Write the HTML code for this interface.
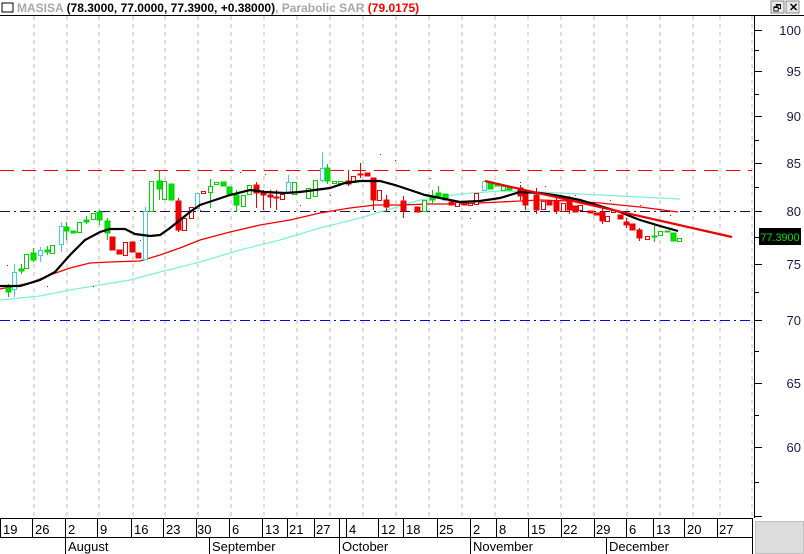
<!DOCTYPE html>
<html><head><meta charset="utf-8"><style>
body{margin:0;width:804px;height:554px;overflow:hidden;background:#fff;font-family:"Liberation Sans",sans-serif}
</style></head><body>
<svg width="804" height="554" xmlns="http://www.w3.org/2000/svg" style="position:absolute;left:0;top:0" font-family="Liberation Sans, sans-serif">
<rect x="0" y="0" width="804" height="554" fill="#fff"/>
<rect x="2" y="3" width="11" height="9" fill="#fff" stroke="#000" stroke-width="1"/>
<text x="17" y="12" font-size="12" font-weight="bold" fill="#a8a8a8">MASISA <tspan fill="#000">(78.3000, 77.0000, 77.3900, +0.38000)</tspan>, Parabolic SAR <tspan fill="#ff0000">(79.0175)</tspan></text>
<rect x="771" y="1" width="13" height="12" fill="#e8e8e8" stroke="#888"/>
<rect x="786" y="1" width="13" height="12" fill="#e8e8e8" stroke="#888"/>
<text x="773" y="11" font-size="9" fill="#000">🗗</text>
<text x="789" y="11" font-size="11" font-weight="bold" fill="#000">✕</text>
<line x1="0" y1="15.5" x2="804" y2="15.5" stroke="#000"/>
<g stroke="#bbb" stroke-dasharray="4,4">
<line x1="34" y1="16" x2="34" y2="518"/><line x1="67" y1="16" x2="67" y2="518"/><line x1="99" y1="16" x2="99" y2="518"/><line x1="133" y1="16" x2="133" y2="518"/><line x1="165" y1="16" x2="165" y2="518"/><line x1="198" y1="16" x2="198" y2="518"/><line x1="231" y1="16" x2="231" y2="518"/><line x1="264" y1="16" x2="264" y2="518"/><line x1="297" y1="16" x2="297" y2="518"/><line x1="330" y1="16" x2="330" y2="518"/><line x1="363" y1="16" x2="363" y2="518"/><line x1="396" y1="16" x2="396" y2="518"/><line x1="429" y1="16" x2="429" y2="518"/><line x1="462" y1="16" x2="462" y2="518"/><line x1="495" y1="16" x2="495" y2="518"/><line x1="528" y1="16" x2="528" y2="518"/><line x1="561" y1="16" x2="561" y2="518"/><line x1="594" y1="16" x2="594" y2="518"/><line x1="627" y1="16" x2="627" y2="518"/><line x1="660" y1="16" x2="660" y2="518"/><line x1="693" y1="16" x2="693" y2="518"/><line x1="720" y1="16" x2="720" y2="518"/><line x1="752" y1="16" x2="752" y2="518"/>
</g>
<line x1="0" y1="170.5" x2="752" y2="170.5" stroke="#ff0000" stroke-dasharray="14,8"/>
<line x1="0" y1="211.5" x2="752" y2="211.5" stroke="#101060" stroke-dasharray="10,4,2,4"/>
<line x1="0" y1="320.5" x2="752" y2="320.5" stroke="#0000ff" stroke-dasharray="10,4,2,4"/>
<polyline fill="none" stroke="#7ff0d8" stroke-width="1.3" points="0,300 40,296 70,290 100,285 130,280 160,272 200,262 240,250 280,240 320,228 360,218 380,212 420,200 460,194 500,191 540,192 580,194 620,196 660,198 680,199"/>
<polyline fill="none" stroke="#ee0000" stroke-width="1.3" points="0,289 30,283 50,275 70,268 90,263 110,262 140,261 160,255 180,248 200,240 230,232 260,225 290,220 320,213 350,208 375,205 400,205 430,204 460,204 500,202 540,200 570,201 600,203 640,207 678,212"/>
<g stroke-width="1">
<g stroke="#00d000" fill="#00e000">
<line x1="8.5" y1="284" x2="8.5" y2="297"/><rect x="6" y="288" width="5" height="4"/>
<line x1="21.5" y1="264" x2="21.5" y2="274"/><rect x="19" y="269" width="5" height="2"/>
<line x1="33.5" y1="248" x2="33.5" y2="262"/><rect x="31" y="253" width="5" height="7"/>
<line x1="47.5" y1="246" x2="47.5" y2="255"/><rect x="45" y="250" width="5" height="2"/>
<line x1="66.5" y1="222" x2="66.5" y2="240"/><rect x="64" y="227" width="5" height="4"/>
<rect x="71" y="231" width="5" height="2"/>
<line x1="86.5" y1="216" x2="86.5" y2="224"/><rect x="84" y="220" width="5" height="2"/>
<line x1="99.5" y1="210" x2="99.5" y2="225"/><rect x="97" y="212" width="5" height="8"/>
<line x1="107.5" y1="218" x2="107.5" y2="240"/><rect x="105" y="221" width="5" height="12"/>
<line x1="159.5" y1="171" x2="159.5" y2="200"/><rect x="157" y="181" width="5" height="8"/>
<rect x="169" y="184" width="5" height="16"/>
<line x1="210.5" y1="179" x2="210.5" y2="208"/>
<rect x="221" y="182" width="5" height="4"/><rect x="227" y="187" width="5" height="7"/>
<line x1="236.5" y1="190" x2="236.5" y2="212"/><rect x="234" y="195" width="5" height="10"/>
<rect x="300" y="191" width="5" height="1"/>
<line x1="327.5" y1="164" x2="327.5" y2="184"/><rect x="325" y="168" width="5" height="13"/>
<line x1="432.5" y1="190" x2="432.5" y2="203"/><rect x="430" y="196" width="5" height="4"/>
<line x1="438.5" y1="186" x2="438.5" y2="198"/><rect x="436" y="193" width="5" height="3"/>
<rect x="443" y="194" width="5" height="6"/>
<rect x="488" y="182" width="5" height="7"/><rect x="495" y="184" width="5" height="2"/><rect x="507" y="187" width="5" height="3"/>
<line x1="654.5" y1="224" x2="654.5" y2="242"/><rect x="652" y="236" width="5" height="1"/>
<rect x="665" y="231" width="5" height="1"/>
<rect x="671" y="233" width="5" height="8"/>
</g>
<g stroke="#00d000" fill="#fff">
<rect x="24.5" y="254.5" width="4" height="14"/>
<rect x="50.5" y="245.5" width="4" height="8"/>
<rect x="77.5" y="222.5" width="4" height="10"/>
<rect x="91.5" y="213.5" width="4" height="6"/>
<rect x="149.5" y="181.5" width="4" height="30"/>
<rect x="162.5" y="181.5" width="4" height="18"/>
<rect x="208.5" y="186.5" width="4" height="6"/>
<rect x="214.5" y="182.5" width="4" height="2"/>
<rect x="241.5" y="195.5" width="4" height="11"/>
<rect x="247.5" y="185.5" width="4" height="9"/>
<rect x="292.5" y="182.5" width="4" height="12"/>
<rect x="306.5" y="188.5" width="4" height="10"/>
<rect x="313.5" y="180.5" width="4" height="16"/>
<rect x="332.5" y="181.5" width="4" height="2"/>
<rect x="338.5" y="181.5" width="4" height="2"/>
<rect x="422.5" y="200.5" width="4" height="11"/>
<rect x="501.5" y="186.5" width="4" height="4"/>
<rect x="658.5" y="231.5" width="4" height="4"/>
<rect x="677.5" y="238.5" width="4" height="3"/>
</g>
<g stroke="#40d0d0" fill="#fff">
<line x1="14.5" y1="264" x2="14.5" y2="297"/><rect x="12.5" y="272.5" width="4" height="17"/>
<line x1="40.5" y1="247" x2="40.5" y2="262"/><rect x="38.5" y="250.5" width="4" height="5"/>
<line x1="61.5" y1="222" x2="61.5" y2="252"/><rect x="59.5" y="226.5" width="4" height="18"/>
<line x1="145.5" y1="207" x2="145.5" y2="259"/><rect x="143.5" y="211.5" width="4" height="48"/>
<rect x="195.5" y="193.5" width="4" height="15"/>
<line x1="288.5" y1="175" x2="288.5" y2="194"/><rect x="286.5" y="182.5" width="4" height="10"/>
<line x1="322.5" y1="152" x2="322.5" y2="182"/><rect x="320.5" y="168.5" width="4" height="12"/>
<rect x="482.5" y="181.5" width="4" height="9"/>
</g>
<g stroke="#ee0000" fill="#ee0000">
<rect x="110" y="237" width="5" height="13"/><rect x="117" y="250" width="5" height="4"/>
<rect x="130" y="242" width="5" height="10"/><rect x="136" y="253" width="5" height="5"/>
<line x1="178.5" y1="198" x2="178.5" y2="232"/><rect x="176" y="201" width="5" height="29"/>
<line x1="256.5" y1="182" x2="256.5" y2="208"/><rect x="254" y="185" width="5" height="8"/>
<line x1="263.5" y1="190" x2="263.5" y2="210"/><rect x="261" y="193" width="5" height="2"/>
<line x1="270.5" y1="190" x2="270.5" y2="208"/><rect x="268" y="195" width="5" height="2"/>
<line x1="276.5" y1="190" x2="276.5" y2="210"/><rect x="274" y="197" width="5" height="1"/>
<line x1="348.5" y1="170" x2="348.5" y2="186"/><rect x="346" y="181" width="5" height="3"/>
<line x1="360.5" y1="163" x2="360.5" y2="178"/><rect x="358" y="174" width="5" height="1"/>
<rect x="365" y="173" width="5" height="3"/>
<line x1="373.5" y1="178" x2="373.5" y2="210"/><rect x="371" y="178" width="5" height="22"/>
<line x1="386.5" y1="195" x2="386.5" y2="212"/><rect x="384" y="200" width="5" height="7"/>
<line x1="403.5" y1="196" x2="403.5" y2="218"/><rect x="401" y="201" width="5" height="10"/>
<rect x="415" y="207" width="5" height="5"/>
<rect x="449" y="202" width="5" height="3"/><rect x="462" y="202" width="5" height="3"/>
<line x1="520.5" y1="185" x2="520.5" y2="200"/><rect x="518" y="188" width="5" height="8"/>
<line x1="525.5" y1="190" x2="525.5" y2="210"/><rect x="523" y="193" width="5" height="12"/>
<line x1="536.5" y1="188" x2="536.5" y2="214"/><rect x="534" y="195" width="5" height="15"/>
<rect x="547" y="201" width="5" height="4"/>
<line x1="556.5" y1="196" x2="556.5" y2="214"/><rect x="554" y="201" width="5" height="10"/>
<line x1="569.5" y1="196" x2="569.5" y2="214"/><rect x="567" y="202" width="5" height="8"/>
<rect x="573" y="206" width="5" height="6"/>
<rect x="588" y="211" width="5" height="2"/><rect x="594" y="213" width="5" height="2"/>
<line x1="602.5" y1="208" x2="602.5" y2="224"/><rect x="600" y="212" width="5" height="9"/>
<rect x="618" y="215" width="5" height="4"/>
<line x1="626.5" y1="218" x2="626.5" y2="228"/><rect x="624" y="222" width="5" height="3"/>
<rect x="630" y="224" width="5" height="6"/>
<line x1="639.5" y1="228" x2="639.5" y2="241"/><rect x="637" y="230" width="5" height="8"/>
</g>
<g stroke="#ee0000" fill="#fff">
<rect x="123.5" y="242.5" width="4" height="13"/>
<rect x="182.5" y="218.5" width="4" height="12"/>
<rect x="189.5" y="207.5" width="4" height="11"/>
<rect x="201.5" y="191.5" width="4" height="2"/>
<rect x="280.5" y="194.5" width="4" height="5"/>
<rect x="351.5" y="176.5" width="4" height="6"/>
<rect x="377.5" y="190.5" width="4" height="10"/>
<rect x="455.5" y="202.5" width="4" height="4"/>
<rect x="468.5" y="203.5" width="4" height="2"/>
<rect x="474.5" y="193.5" width="4" height="11"/>
<rect x="541.5" y="201.5" width="4" height="8"/>
<rect x="561.5" y="203.5" width="4" height="8"/>
<rect x="578.5" y="205.5" width="4" height="5"/>
<rect x="605.5" y="216.5" width="4" height="5"/>
<rect x="611.5" y="210.5" width="4" height="2"/>
<rect x="645.5" y="236.5" width="4" height="3"/>
</g>
</g>
<g fill="#ee0000">
<rect x="7" y="265" width="1" height="1"/><rect x="47" y="286" width="1" height="1"/><rect x="93" y="286" width="1" height="1"/><rect x="140" y="240" width="1" height="1"/><rect x="200" y="210" width="1" height="1"/><rect x="240" y="172" width="1" height="1"/><rect x="265" y="174" width="1" height="1"/><rect x="300" y="205" width="1" height="1"/><rect x="330" y="195" width="1" height="1"/><rect x="380" y="154" width="1" height="1"/><rect x="395" y="160" width="1" height="1"/><rect x="430" y="178" width="1" height="1"/><rect x="470" y="218" width="1" height="1"/><rect x="520" y="182" width="1" height="1"/><rect x="545" y="186" width="1" height="1"/><rect x="575" y="195" width="1" height="1"/><rect x="610" y="200" width="1" height="1"/><rect x="640" y="205" width="1" height="1"/><rect x="670" y="215" width="1" height="1"/>
</g>
<polyline fill="none" stroke="#000" stroke-width="2.2" points="0,286 20,286 40,280 55,272 70,255 85,240 100,232 110,229 125,229 135,234 150,236 160,235 170,228 180,220 190,212 200,205 215,200 230,195 250,190 265,192 285,193 300,192 315,190 330,188 345,183 360,181 380,181 395,185 410,190 425,195 440,198 460,202 480,201 500,198 520,192 540,193 560,196 580,200 600,206 620,212 640,220 660,226 678,231"/>
<line x1="485" y1="181" x2="732" y2="237" stroke="#ee0000" stroke-width="2.2"/>
<line x1="754.5" y1="16" x2="754.5" y2="518" stroke="#000"/>
<g stroke="#000">
<line x1="755" y1="30.5" x2="762" y2="30.5"/><line x1="755" y1="71.5" x2="762" y2="71.5"/><line x1="755" y1="116.5" x2="762" y2="116.5"/><line x1="755" y1="163.5" x2="762" y2="163.5"/><line x1="755" y1="211.5" x2="762" y2="211.5"/><line x1="755" y1="264.5" x2="762" y2="264.5"/><line x1="755" y1="320.5" x2="762" y2="320.5"/><line x1="755" y1="383.5" x2="762" y2="383.5"/><line x1="755" y1="447.5" x2="762" y2="447.5"/><line x1="755" y1="516.5" x2="762" y2="516.5"/>
<line x1="755" y1="50.5" x2="759" y2="50.5"/><line x1="755" y1="94.5" x2="759" y2="94.5"/><line x1="755" y1="140.5" x2="759" y2="140.5"/><line x1="755" y1="187.5" x2="759" y2="187.5"/><line x1="755" y1="237.5" x2="759" y2="237.5"/><line x1="755" y1="292.5" x2="759" y2="292.5"/><line x1="755" y1="351.5" x2="759" y2="351.5"/><line x1="755" y1="415.5" x2="759" y2="415.5"/><line x1="755" y1="482.5" x2="759" y2="482.5"/>
</g>
<g font-size="13" fill="#1a1a50" text-anchor="end">
<text x="801" y="35">100</text><text x="801" y="76">95</text><text x="801" y="121">90</text><text x="801" y="168">85</text><text x="801" y="216">80</text><text x="801" y="269">75</text><text x="801" y="325">70</text><text x="801" y="388">65</text><text x="801" y="452">60</text>
</g>
<rect x="759" y="228" width="42" height="17" fill="#000"/>
<text x="780" y="241" font-size="11" fill="#00e000" text-anchor="middle" textLength="39" lengthAdjust="spacingAndGlyphs">77.3900</text>
<line x1="0" y1="518.5" x2="752" y2="518.5" stroke="#000"/>
<line x1="0" y1="537.5" x2="752" y2="537.5" stroke="#000"/>
<line x1="752.5" y1="518" x2="752.5" y2="554" stroke="#000"/>
<rect x="755.5" y="521.5" width="48" height="32" fill="#dcdcdc" stroke="#c0c0c0"/>
<g stroke="#000">
<line x1="0.5" y1="518" x2="0.5" y2="537"/><line x1="32.5" y1="518" x2="32.5" y2="537"/><line x1="65.5" y1="518" x2="65.5" y2="554"/><line x1="97.5" y1="518" x2="97.5" y2="537"/><line x1="131.5" y1="518" x2="131.5" y2="537"/><line x1="163.5" y1="518" x2="163.5" y2="537"/><line x1="196.5" y1="518" x2="196.5" y2="537"/><line x1="209.5" y1="537" x2="209.5" y2="554"/><line x1="229.5" y1="518" x2="229.5" y2="537"/><line x1="262.5" y1="518" x2="262.5" y2="537"/><line x1="287.5" y1="518" x2="287.5" y2="537"/><line x1="314.5" y1="518" x2="314.5" y2="537"/><line x1="339.5" y1="518" x2="339.5" y2="554"/><line x1="346.5" y1="518" x2="346.5" y2="537"/><line x1="378.5" y1="518" x2="378.5" y2="537"/><line x1="403.5" y1="518" x2="403.5" y2="537"/><line x1="437.5" y1="518" x2="437.5" y2="537"/><line x1="470.5" y1="518" x2="470.5" y2="554"/><line x1="496.5" y1="518" x2="496.5" y2="537"/><line x1="528.5" y1="518" x2="528.5" y2="537"/><line x1="561.5" y1="518" x2="561.5" y2="537"/><line x1="594.5" y1="518" x2="594.5" y2="537"/><line x1="606.5" y1="537" x2="606.5" y2="554"/><line x1="626.5" y1="518" x2="626.5" y2="537"/><line x1="653.5" y1="518" x2="653.5" y2="537"/><line x1="684.5" y1="518" x2="684.5" y2="537"/><line x1="717.5" y1="518" x2="717.5" y2="537"/>
</g>
<g font-size="13" fill="#000">
<text x="3" y="534">19</text><text x="35" y="534">26</text><text x="68" y="534">2</text><text x="100" y="534">9</text><text x="134" y="534">16</text><text x="166" y="534">23</text><text x="197" y="534">30</text><text x="232" y="534">6</text><text x="265" y="534">13</text><text x="289" y="534">21</text><text x="316" y="534">27</text><text x="349" y="534">4</text><text x="381" y="534">12</text><text x="406" y="534">18</text><text x="439" y="534">25</text><text x="473" y="534">2</text><text x="499" y="534">8</text><text x="531" y="534">15</text><text x="563" y="534">22</text><text x="596" y="534">29</text><text x="629" y="534">6</text><text x="656" y="534">13</text><text x="687" y="534">20</text><text x="719" y="534">27</text>
<text x="68" y="551">August</text><text x="212" y="551">September</text><text x="342" y="551">October</text><text x="473" y="551">November</text><text x="609" y="551">December</text>
</g>
</svg>
</body></html>
